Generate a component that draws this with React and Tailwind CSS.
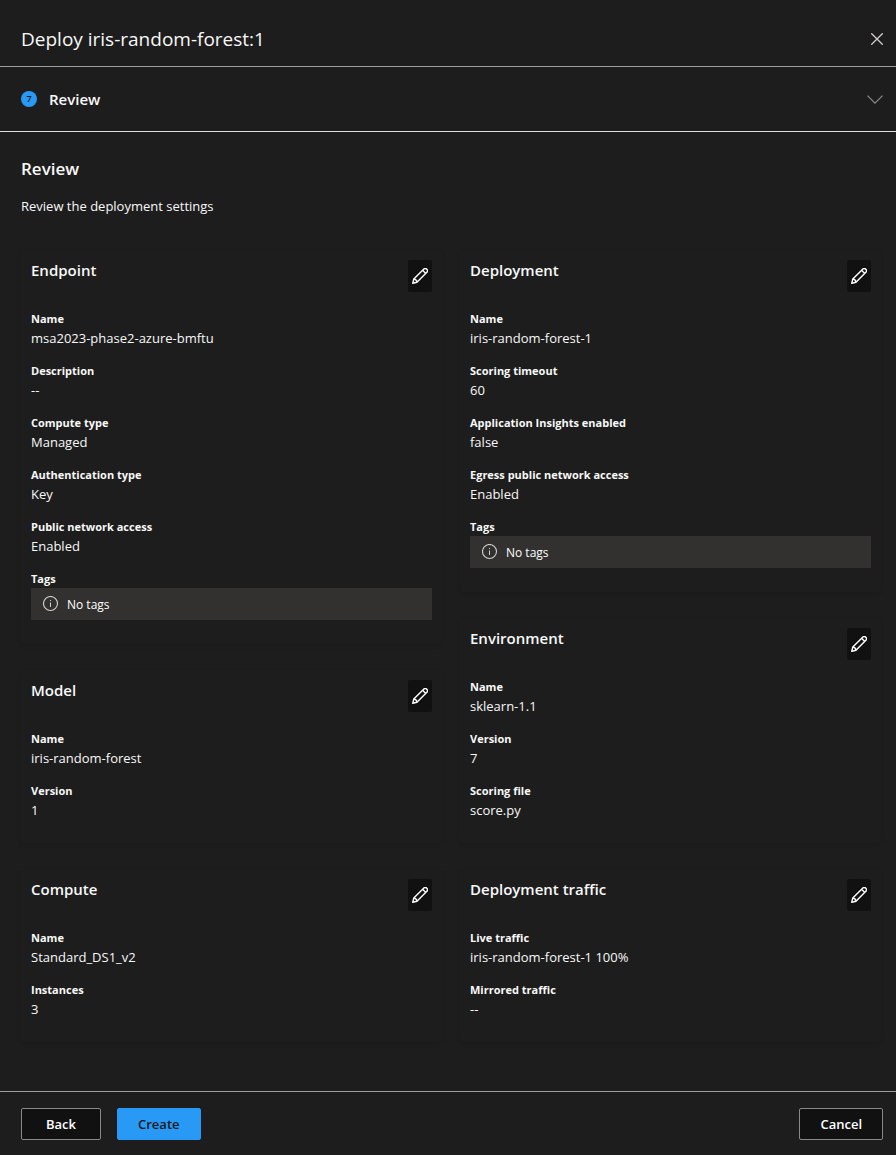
const leftCards = [
  {
    title: 'Endpoint',
    fields: [
      ['Name', 'msa2023-phase2-azure-bmftu'],
      ['Description', '--'],
      ['Compute type', 'Managed'],
      ['Authentication type', 'Key'],
      ['Public network access', 'Enabled'],
      ['Tags', null],
    ],
  },
  {
    title: 'Model',
    fields: [
      ['Name', 'iris-random-forest'],
      ['Version', '1'],
    ],
  },
  {
    title: 'Compute',
    fields: [
      ['Name', 'Standard_DS1_v2'],
      ['Instances', '3'],
    ],
  },
];

const rightCards = [
  {
    title: 'Deployment',
    fields: [
      ['Name', 'iris-random-forest-1'],
      ['Scoring timeout', '60'],
      ['Application Insights enabled', 'false'],
      ['Egress public network access', 'Enabled'],
      ['Tags', null],
    ],
  },
  {
    title: 'Environment',
    fields: [
      ['Name', 'sklearn-1.1'],
      ['Version', '7'],
      ['Scoring file', 'score.py'],
    ],
  },
  {
    title: 'Deployment traffic',
    fields: [
      ['Live traffic', 'iris-random-forest-1 100%'],
      ['Mirrored traffic', '--'],
    ],
  },
];

function PencilIcon() {
  return (
    <svg viewBox="0 0 16 16" className="size-4" fill="none" stroke="currentColor" strokeWidth="1.4" strokeLinejoin="round" aria-hidden="true">
      <path d="M0.7 15.3 L1.8 11 L11.9 0.9 C12.8 0.3 14 0.4 14.8 1.2 C15.6 2 15.7 3.2 15.1 4.1 L5 14.2 Z" />
      <path d="M10.6 2.2 L13.8 5.4 M1.8 11 C3.4 11.2 4.8 12.6 5 14.2" />
    </svg>
  );
}

function InfoIcon() {
  return (
    <svg viewBox="0 0 16 16" className="size-4 shrink-0 text-[#d2d0ce]" fill="none" stroke="currentColor" aria-hidden="true">
      <circle cx="7.5" cy="7.5" r="7" strokeWidth="1.1" />
      <path d="M7.5 6.5 V11 M7.5 4 V5.1" strokeWidth="1" />
    </svg>
  );
}

function Card({ title, fields }) {
  return (
    <section className="rounded-sm px-[10px] pt-[10px] pb-6 shadow-[0_2px_4px_rgba(0,0,0,0.1)]">
      <div className="mb-[18px] flex items-start justify-between">
        <h3 className="text-[15px] leading-5 font-semibold">{title}</h3>
        <button type="button" aria-label={`Edit ${title}`} className="flex h-8 w-6 items-center justify-center rounded-xs bg-[#111111] text-white">
          <PencilIcon />
        </button>
      </div>
      <dl className="flex flex-col gap-[15px]">
        {fields.map(([label, value]) => (
          <div key={label}>
            <dt className="text-[11px] leading-[18px] font-bold">{label}</dt>
            {value === null ? (
              <dd className="flex h-8 items-center gap-2 bg-[#323130] px-3 text-[12px] text-white">
                <InfoIcon />
                <span className="pt-px">No tags</span>
              </dd>
            ) : (
              <dd className="h-[19px] text-[13px] leading-[21px]">{value}</dd>
            )}
          </div>
        ))}
      </dl>
    </section>
  );
}

export default function App() {
  return (
    <div className="flex min-h-screen flex-col bg-[#1d1d1d] font-['Segoe_UI','Open_Sans',sans-serif] text-[#f8f8f8]">
      <header className="flex h-[67px] items-center justify-between border-b border-[#a19f9d] pt-[11px] pr-[13px] pl-[21px]">
        <h1 className="text-[19px] leading-7">Deploy iris-random-forest:1</h1>
        <button type="button" aria-label="Close" className="text-[#d2d0ce]">
          <svg viewBox="0 0 12 12" className="size-3" fill="none" stroke="currentColor" strokeWidth="1.3" aria-hidden="true">
            <path d="M0.3 0.3 L11.7 11.7 M11.7 0.3 L0.3 11.7" />
          </svg>
        </button>
      </header>

      <button type="button" aria-expanded="false" className="flex h-[65px] items-center border-b border-[#e1dfdd] pr-[13px] pl-[21px] text-left">
        <span className="flex size-4 items-center justify-center rounded-full bg-[#2899f5] text-[9px] font-semibold text-[#1b1a19]">7</span>
        <span className="ml-3 text-[15px] leading-5 font-semibold">Review</span>
        <svg viewBox="0 0 16 9" className="ml-auto h-[9px] w-4 text-[#8a8886]" fill="none" stroke="currentColor" strokeWidth="1.3" aria-hidden="true">
          <path d="M0.5 0.6 L8 8.1 L15.5 0.6" />
        </svg>
      </button>

      <main className="grow pt-[23px] pr-[15px] pb-12 pl-[21px]">
        <h2 className="text-[17px] leading-7 font-semibold">Review</h2>
        <p className="mt-[13px] text-[13px] leading-5">Review the deployment settings</p>
        <div className="mt-[34px] grid grid-cols-2 gap-x-[18px]">
          <div className="flex flex-col gap-[26px]">
            {leftCards.map((card) => (
              <Card key={card.title} {...card} />
            ))}
          </div>
          <div className="flex flex-col gap-[26px]">
            {rightCards.map((card) => (
              <Card key={card.title} {...card} />
            ))}
          </div>
        </div>
      </main>

      <footer className="flex items-center gap-4 border-t border-[#a19f9d] pt-4 pr-[13px] pb-[15px] pl-[21px] text-[13px] font-semibold">
        <button type="button" className="h-8 min-w-20 rounded-xs border border-[#8a8886] bg-[#111111] px-5 pt-px text-white">Back</button>
        <button type="button" className="h-8 min-w-20 rounded-xs border border-[#2899f5] bg-[#2899f5] px-5 pt-px text-[#1b1a19]">Create</button>
        <button type="button" className="ml-auto h-8 min-w-20 rounded-xs border border-[#8a8886] bg-[#111111] px-5 pt-px text-white">Cancel</button>
      </footer>
    </div>
  );
}
